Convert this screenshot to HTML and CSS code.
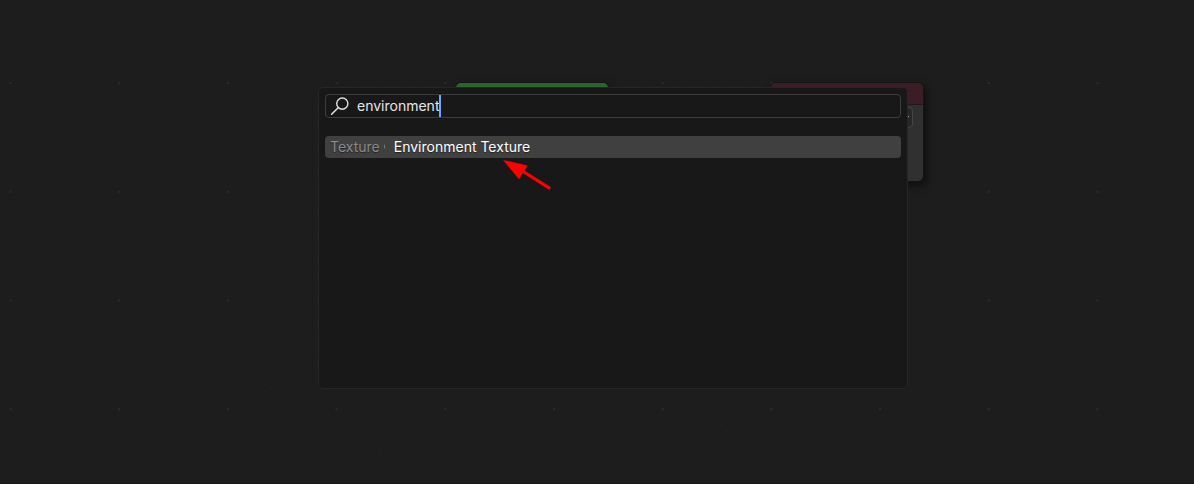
FILE: index.html
```html
<!DOCTYPE html>
<html lang="en">
<head>
<meta charset="utf-8">
<title>Node search</title>
<link rel="stylesheet" href="styles.css">
</head>
<body>
<main class="canvas">
  <svg class="grid" aria-hidden="true">
    <defs>
      <pattern id="minor" x="9.6" y="82.7" width="21.74" height="21.74" patternUnits="userSpaceOnUse">
        <rect width="1" height="1" fill="#272727"/>
      </pattern>
      <pattern id="major" x="9.5" y="82" width="108.7" height="108.7" patternUnits="userSpaceOnUse">
        <rect width="2" height="2" fill="#2b2b2b"/>
      </pattern>
    </defs>
    <rect width="100%" height="100%" fill="url(#minor)"/>
    <rect width="100%" height="100%" fill="url(#major)"/>
  </svg>

  <section class="node node-shader" aria-label="Shader node">
    <div class="node-header"></div>
  </section>
  <section class="node node-output" aria-label="Output node">
    <div class="node-header"></div>
    <div class="node-body">
      <button class="target" type="button" aria-label="Target">
        <svg width="8" height="6" viewBox="0 0 8 6" aria-hidden="true"><path d="M1 1.5 4 4.5 7 1.5" fill="none" stroke="#e6e6e6" stroke-width="1.4" stroke-linecap="round"/></svg>
      </button>
    </div>
  </section>

  <section class="popup" aria-label="Add node">
    <label class="search">
      <svg class="search-icon" width="20" height="20" viewBox="0 0 20 20" aria-hidden="true">
        <circle cx="12.3" cy="7.6" r="5.6" fill="none" stroke="#e2e2e2" stroke-width="1.4"/>
        <path d="M8.2 11.7 1.6 18.3" fill="none" stroke="#e2e2e2" stroke-width="1.5" stroke-linecap="round"/>
      </svg>
      <input class="search-input" type="text" value="environment" aria-label="Search" spellcheck="false">
      <span class="caret"></span>
    </label>
    <button class="result" type="button">
      <span class="category">Texture</span>
      <svg class="separator" width="6" height="8" viewBox="0 0 6 8" aria-hidden="true"><path d="M1 1v5l1-1.5v-2z" fill="#777"/></svg>
      <span class="name">Environment Texture</span>
    </button>
  </section>

  <svg class="arrow" width="50" height="32" viewBox="0 0 50 32" aria-hidden="true">
    <path d="M0 0 24.5 5.5 21.5 10.5 48 27.3 46.4 30 19.7 13 16 19.2z" fill="#f00"/>
  </svg>
</main>
</body>
</html>
```

FILE: styles.css
```css
* {
  box-sizing: border-box;
}

body {
  margin: 0;
  background: #1d1d1d;
  color: #e6e6e6;
  font: 14px/20px Inter, "Liberation Sans", sans-serif;
}

button,
input {
  font: inherit;
  color: inherit;
}

.canvas {
  position: relative;
  min-height: 100vh;
  overflow: hidden;
  border-bottom: 1px solid #191417;
}

.grid {
  position: absolute;
  inset: 0;
  width: 100%;
  height: 100%;
}

.node {
  position: absolute;
  top: 83px;
  width: 152px;
  border-radius: 5px;
  background: #303030;
  box-shadow: 0 0 0 1px #141414, 3px 4px 10px rgba(0, 0, 0, 0.6);
  overflow: hidden;
}

.node-shader {
  left: 456px;
}

.node-output {
  left: 771px;
}

.node-header {
  height: 22px;
}

.node-shader .node-header {
  background: #2b652b;
}

.node-output .node-header {
  background: #3c1d26;
  border-bottom: 1px solid #28151b;
}

.node-body {
  min-height: 76px;
  padding: 2px 10px;
}

.target {
  display: flex;
  align-items: center;
  justify-content: flex-end;
  width: 100%;
  height: 21px;
  padding: 0 3px;
  border: 1px solid #454545;
  border-radius: 4px;
  background: #282828;
}

.popup {
  position: absolute;
  top: 87px;
  left: 318px;
  width: 590px;
  min-height: 302px;
  padding: 6px;
  border: 1px solid #262626;
  border-radius: 5px;
  background: #181818;
}

.search {
  display: flex;
  align-items: center;
  height: 24px;
  padding: 0 4px;
  border: 1px solid #3d3d3d;
  border-radius: 4px;
}

.search-icon {
  flex: none;
  margin-right: 7px;
}

.search-input {
  field-sizing: content;
  padding: 0;
  border: 0;
  outline: 0;
  background: none;
}

.caret {
  width: 2px;
  height: 22px;
  background: #71a8ff;
}

.result {
  display: flex;
  align-items: center;
  width: 100%;
  height: 22px;
  margin-top: 18px;
  padding: 0 5px;
  border: 0;
  border-radius: 4px;
  background: #404040;
  text-shadow: 0 1px 1px rgba(0, 0, 0, 0.5);
}

.category {
  color: #8b8b8b;
}

.separator {
  margin: 0 5px 0 3px;
}

.name {
  color: #fff;
}

.arrow {
  position: absolute;
  top: 160px;
  left: 503px;
}
```
